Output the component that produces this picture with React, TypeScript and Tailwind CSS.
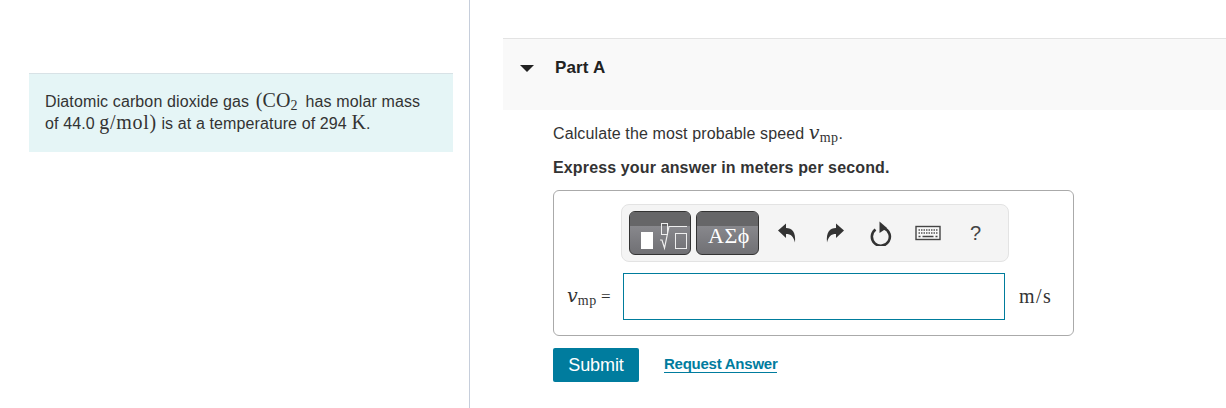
const serif = "font-['Liberation_Serif',serif]";

function Sub({ children }: { children: string }) {
  return <sub className="relative -bottom-[3px] align-baseline text-[14px] leading-none tracking-[0.4px]">{children}</sub>;
}

function V() {
  return <i className="font-['DejaVu_Serif',serif] text-[19px]">v</i>;
}

function TemplateBtn({ w, children }: { w: string; children: React.ReactNode }) {
  return (
    <div className={`${w} relative h-[44px] overflow-hidden rounded-[6px] border border-[#333] bg-gradient-to-b from-[#949499] to-[#707074]`}>
      <div className="h-[14px] bg-[#666668]" />
      <div className="absolute inset-0">{children}</div>
    </div>
  );
}

export default function App() {
  return (
    <div className="flex h-[408px] w-[1226px] overflow-hidden bg-white font-['Liberation_Sans',sans-serif] text-[16px] tracking-[0.12px] text-[#333]">
      <div className="w-[470px] shrink-0 border-r border-[#c6cedb] pl-[29px] pt-[73px]">
        <div className="h-[79px] w-[424px] border-t border-[#d8e2e6] bg-[#e5f5f6] pl-[16px] pt-[15px] leading-[22px]">
          <div className="whitespace-nowrap">
            Diatomic carbon dioxide gas{" "}
            <span className={`${serif} ml-[2px] mr-[3px] text-[20px] tracking-[0.1px]`}>
              (CO<Sub>2</Sub>
            </span>{" "}
            has molar mass
          </div>
          <div className="-mt-[1px] h-[22px] whitespace-nowrap">
            of 44.0 <span className={`${serif} text-[20px] leading-[20px] tracking-[0.7px]`}>g/mol)</span> is at a temperature of 294{" "}
            <span className={`${serif} text-[20px] leading-[20px]`}>K</span>.
          </div>
        </div>
      </div>
      <div className="min-w-0 flex-1 pl-[33px] pt-[38px]">
        <div className="flex h-[72px] border-t border-[#e3e3e3] bg-[#f9f9f9] pt-[16px]">
          <svg width="14" height="7" viewBox="0 0 14 7" className="ml-[17px] mt-[10px]">
            <path d="M0 0H14L7 7Z" fill="#222" />
          </svg>
          <span className="ml-[21px] text-[17px] font-bold tracking-[0.15px] text-[#222]">Part A</span>
        </div>
        <div className="pl-[50px]">
          <p className="mt-[11px] h-[22px] whitespace-nowrap leading-[22px]">
            Calculate the most probable speed{" "}
            <span className={`${serif} text-[20px]`}>
              <V />
              <Sub>mp</Sub>
            </span>
            .
          </p>
          <p className="mt-[14px] h-[22px] font-bold leading-[22px] tracking-[0.14px]">Express your answer in meters per second.</p>
          <div className="mt-[11px] h-[146px] w-[521px] rounded-[6px] border border-[#aaa] pl-[67px] pt-[13px]">
            <div className="flex h-[58px] w-[388px] items-center rounded-[8px] border border-[#e3e3e3] bg-[#f4f4f4] pl-[7px]">
              <TemplateBtn w="w-[62px]">
                <svg width="60" height="42" viewBox="0 0 60 42" fill="none">
                  <rect x="11" y="20" width="12" height="17" fill="#fff" />
                  <rect x="31.500" y="11.500" width="6" height="11" stroke="#eee" />
                  <path d="M30 28H32L34.500 36L39 14.500H57" stroke="#eee" strokeWidth="1.200" />
                  <rect x="45.500" y="21.500" width="11" height="15" stroke="#eee" />
                </svg>
              </TemplateBtn>
              <div className="w-[5px]" />
              <TemplateBtn w="w-[63px]">
                <div className={`${serif} pl-[3px] pt-[11px] text-center text-[22px] leading-[26px] tracking-[0.5px] text-white`}>ΑΣϕ</div>
              </TemplateBtn>
              <svg width="20" height="20" viewBox="0 0 20 20" className="ml-[18px]">
                <path d="M1 7.500L9 .5V5C15 5 19 9 18 19.500C16.500 13.500 14 11 9 11V15Z" fill="#333" />
              </svg>
              <svg width="20" height="20" viewBox="0 0 20 20" className="ml-[28px]">
                <path d="M19 7.500L11 .5V5C5 5 1 9 2 19.500C3.500 13.500 6 11 11 11V15Z" fill="#333" />
              </svg>
              <svg width="22" height="25" viewBox="0 0 22 25" fill="none" className="ml-[25px]">
                <path d="M5.500 8.500A9 9 0 1 0 14 7.300" stroke="#333" strokeWidth="2.600" />
                <path d="M9.500 .5L17 7L9.500 12Z" fill="#333" />
              </svg>
              <svg width="26" height="16" viewBox="0 0 26 16" fill="none" className="ml-[23px]">
                <rect x="1" y="1.500" width="24" height="13" fill="#f8f8f8" stroke="#444" strokeWidth="1.400" />
                <path d="M3.500 5H22.500M3.500 8H22.500" stroke="#555" strokeWidth="1.500" strokeDasharray="1.500 1" />
                <path d="M3.500 11.500H5.500M7.500 11.500H18.500M20.500 11.500H22.500" stroke="#444" strokeWidth="1.500" />
              </svg>
              <span className="ml-[29px] text-[20px] leading-none text-[#444]">?</span>
            </div>
            <div className="-ml-[54px] mt-[11px] flex items-center">
              <span className={`${serif} -mt-[2px] w-[56px] whitespace-nowrap text-[17px]`}>
                <V />
                <Sub>mp</Sub> =
              </span>
              <div className="h-[47px] w-[382px] border border-[#007c9c] bg-white" />
              <span className={`${serif} -mt-[2px] ml-[14px] text-[20px] tracking-[1.500px]`}>m/s</span>
            </div>
          </div>
          <div className="mt-[12px] flex items-center">
            <button className="h-[34px] w-[86px] rounded-[2px] bg-[#007c9e] text-[18px] tracking-[-0.1px] text-white">Submit</button>
            <a className="ml-[25px] -mt-[2px] border-b border-[#007c9e] text-[15px] font-bold leading-[16px] tracking-[-0.25px] text-[#007c9e]">
              Request Answer
            </a>
          </div>
        </div>
      </div>
    </div>
  );
}
